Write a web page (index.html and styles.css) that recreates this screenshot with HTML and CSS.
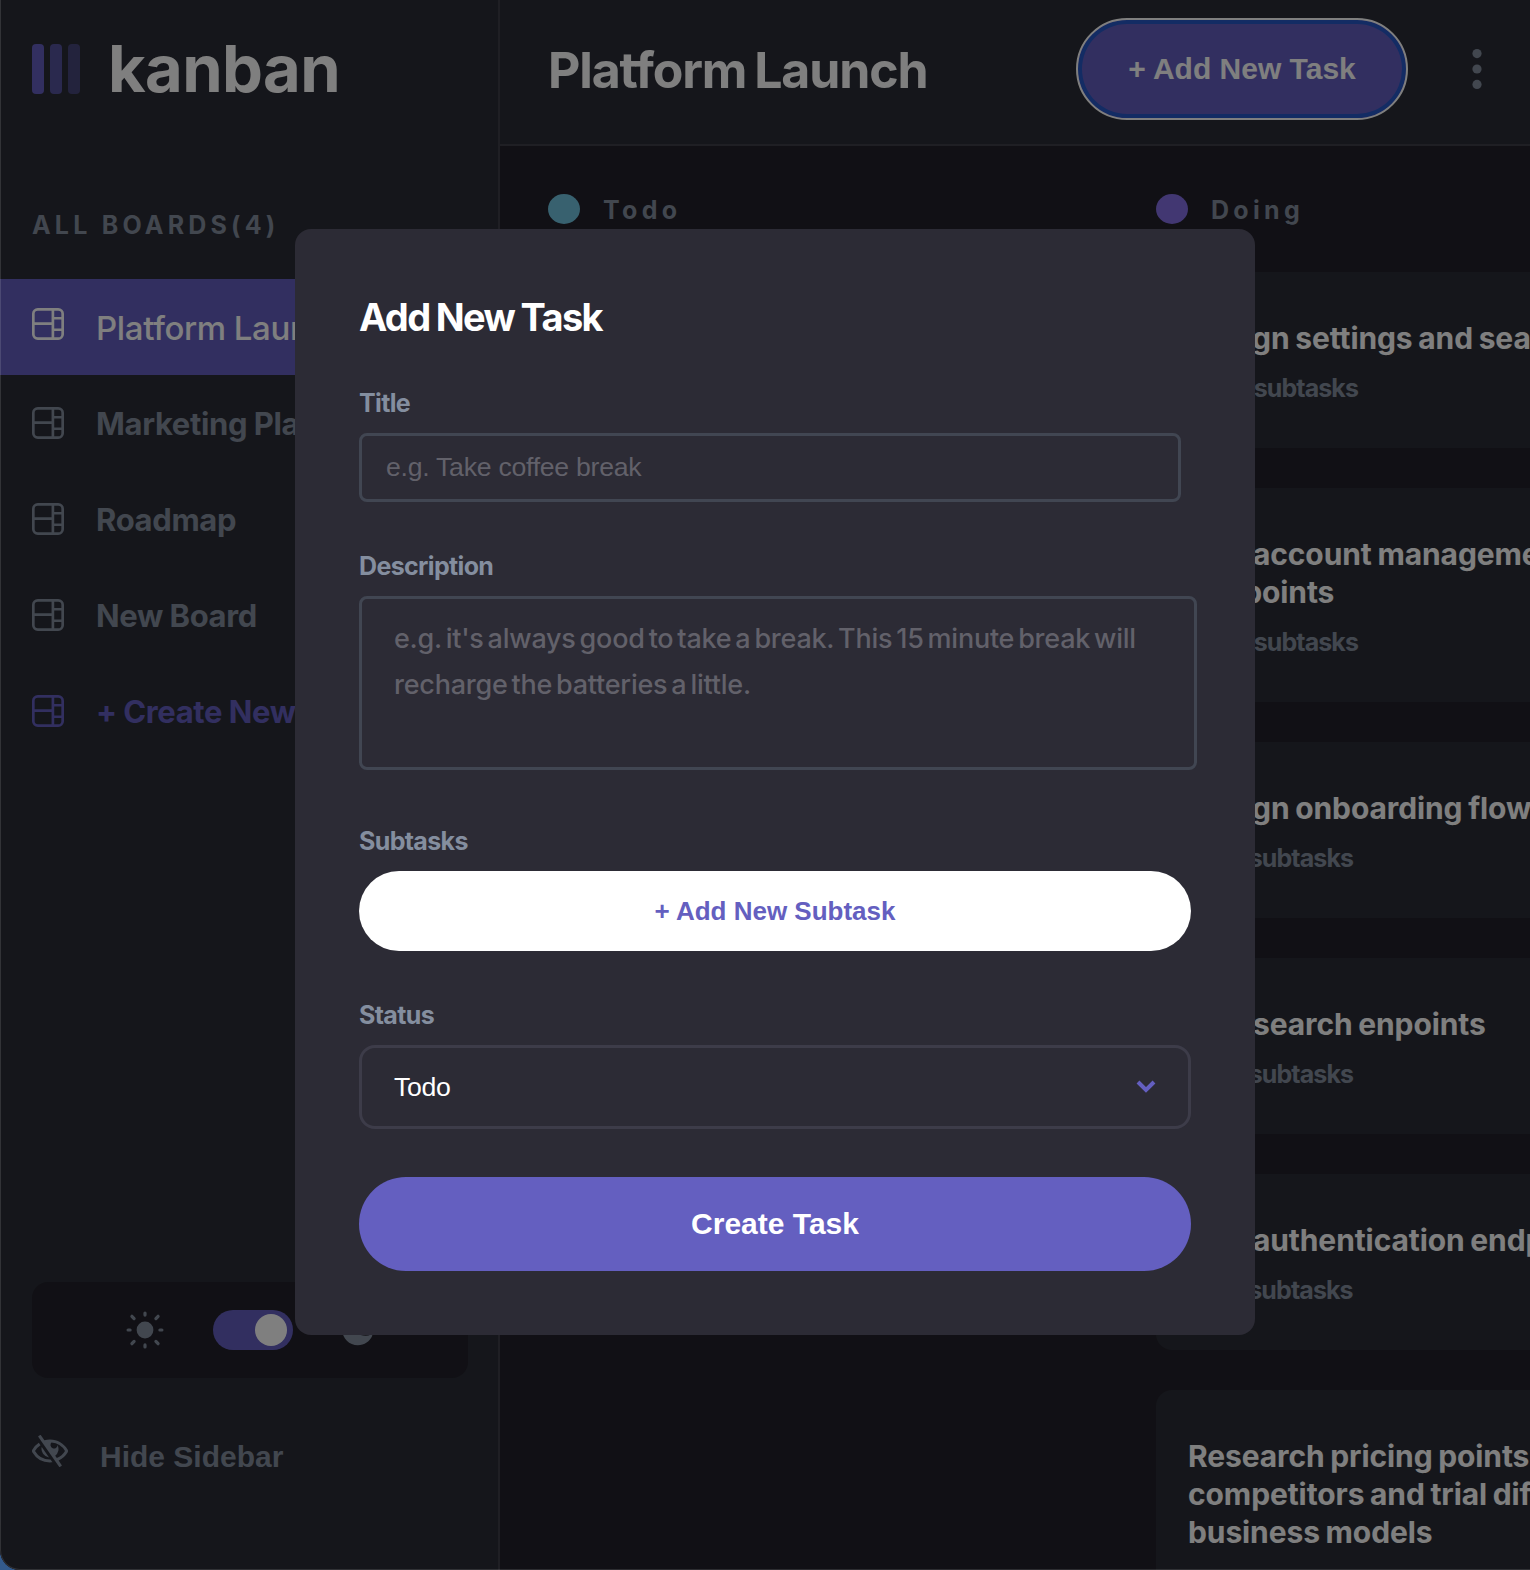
FILE: index.html
```html
<!DOCTYPE html>
<html lang="en">
<head>
<meta charset="utf-8">
<title>Kanban</title>
<link rel="stylesheet" href="styles.css">
</head>
<body>
<svg class="sprite" aria-hidden="true">
  <symbol id="board" viewBox="0 0 16 16"><path d="M0 2.889A2.889 2.889 0 0 1 2.889 0H13.11A2.889 2.889 0 0 1 16 2.889V13.11A2.888 2.888 0 0 1 13.111 16H2.89A2.889 2.889 0 0 1 0 13.111V2.89Zm1.333 5.555v4.667c0 .859.697 1.556 1.556 1.556h6.889V8.444H1.333Zm8.445-1.333V1.333h-6.89A1.556 1.556 0 0 0 1.334 2.89V7.11h8.445Zm4.889-1.333H11.11v4.444h3.556V5.778Zm0 5.778H11.11v3.11h2a1.556 1.556 0 0 0 1.556-1.555v-1.555Zm0-7.112V2.89a1.555 1.555 0 0 0-1.556-1.556h-2v3.111h3.556Z"/></symbol>
</svg>
<div class="app">
  <aside class="sidebar">
    <div class="logo"><span class="bars"><i></i><i></i><i></i></span><span class="wordmark">kanban</span></div>
    <h2 class="boards-title">ALL BOARDS(4)</h2>
    <nav class="boards">
      <a class="item active"><svg class="icon"><use href="#board"/></svg><span>Platform Launch</span></a>
      <a class="item"><svg class="icon"><use href="#board"/></svg><span>Marketing Plan</span></a>
      <a class="item"><svg class="icon"><use href="#board"/></svg><span>Roadmap</span></a>
      <a class="item"><svg class="icon"><use href="#board"/></svg><span>New Board</span></a>
      <a class="item create"><svg class="icon"><use href="#board"/></svg><span>+ Create New Board</span></a>
    </nav>
    <div class="theme">
      <svg class="sun" viewBox="0 0 38 38"><circle cx="19" cy="19" r="8.4"/><path d="M19 2.1v2M19 33.9v2M2.1 19h2M33.9 19h2M5.9 5.3l2.2 2.3M29.9 30.4l2.2 2.3M32.1 5.3l-2.2 2.3M8.1 30.4l-2.2 2.3"/></svg>
      <span class="switch"></span>
      <svg class="moon" viewBox="0 0 16 16"><path d="M6.474.682c.434-.11.718.406.481.78A6.067 6.067 0 0 0 6.01 4.72c0 3.418 2.827 6.187 6.314 6.187.89.002 1.77-.182 2.584-.54.408-.18.894.165.724.57-1.16 2.775-3.944 4.73-7.194 4.73-4.292 0-7.771-3.41-7.771-7.615 0-3.541 2.466-6.518 5.807-7.37Z"/></svg>
    </div>
    <div class="hide">
      <svg class="eye" viewBox="0 0 18 16"><path d="M8.522 11.223a4.252 4.252 0 0 1-3.654-5.22l3.654 5.22ZM9 12.25A8.685 8.685 0 0 1 1.5 8a8.612 8.612 0 0 1 2.76-2.864l-.86-1.23A10.112 10.112 0 0 0 .208 7.238a1.5 1.5 0 0 0 0 1.524A10.187 10.187 0 0 0 9 13.75c.414 0 .828-.025 1.239-.074l-1-1.43A8.88 8.88 0 0 1 9 12.25Zm8.792-3.488a10.14 10.14 0 0 1-4.486 4.046l1.504 2.148a.375.375 0 0 1-.092.523l-.648.453a.375.375 0 0 1-.523-.092L3.19 1.044A.375.375 0 0 1 3.282.52L3.93.068a.375.375 0 0 1 .523.092l1.735 2.479A10.308 10.308 0 0 1 9 2.25c3.746 0 7.031 2 8.792 4.988a1.5 1.5 0 0 1 0 1.524ZM16.5 8a8.674 8.674 0 0 0-6.755-4.219A1.75 1.75 0 1 0 12.75 5v-.001a4.25 4.25 0 0 1-1.154 5.366l.834 1.192A8.641 8.641 0 0 0 16.5 8Z"/></svg>
      <span>Hide Sidebar</span>
    </div>
  </aside>
  <div class="main">
    <header class="topbar">
      <h1>Platform Launch</h1>
      <button class="add-task">+ Add New Task</button>
      <svg class="kebab" viewBox="0 0 10 40"><circle cx="5" cy="4.6" r="4.6"/><circle cx="5" cy="20" r="4.6"/><circle cx="5" cy="35.4" r="4.6"/></svg>
    </header>
    <section class="board">
      <div class="column">
        <h3 class="column-title"><i class="dot todo"></i>Todo</h3>
      </div>
      <div class="column">
        <h3 class="column-title"><i class="dot doing"></i>Doing</h3>
        <article class="card"><h4>Design settings and search</h4><p>2 of 3 subtasks</p></article>
        <article class="card tall"><h4>Add account management<br>endpoints</h4><p>2 of 3 subtasks</p></article>
        <article class="card"><h4>Design onboarding flow</h4><p>1 of 3 subtasks</p></article>
        <article class="card"><h4>Add search enpoints</h4><p>1 of 3 subtasks</p></article>
        <article class="card"><h4>Add authentication endpoints</h4><p>1 of 2 subtasks</p></article>
        <article class="card tallest"><h4>Research pricing points of various<br>competitors and trial different<br>business models</h4><p>1 of 3 subtasks</p></article>
      </div>
    </section>
  </div>
  <div class="overlay">
    <form class="modal">
      <h2 class="modal-title">Add New Task</h2>
      <label>Title</label>
      <input class="field title-field" placeholder="e.g. Take coffee break">
      <label>Description</label>
      <textarea class="field desc-field" placeholder="e.g. it's always good to take a break. This 15 minute break will&#10;recharge the batteries a little."></textarea>
      <label>Subtasks</label>
      <button type="button" class="pill add-subtask">+ Add New Subtask</button>
      <label>Status</label>
      <div class="select"><span>Todo</span><svg class="chevron" viewBox="0 0 10 7"><path d="m1 1 4 4 4-4"/></svg></div>
      <button type="button" class="pill create-task">Create Task</button>
    </form>
  </div>
</div>
</body>
</html>
```
FILE: styles.css
```css
* { box-sizing: border-box; margin: 0; padding: 0; }

body {
  width: 1530px;
  height: 1570px;
  overflow: hidden;
  background: #335a8c;
  font-family: Inter, "Liberation Sans", sans-serif;
  font-variant-ligatures: no-contextual;
}

.sprite { display: none; }

.app {
  position: relative;
  display: grid;
  grid-template-columns: 500px 1fr;
  width: 1530px;
  height: 1570px;
  overflow: hidden;
  border-bottom-left-radius: 20px;
  background: #22212a;
  color: #fff;
}

/* window hairline */
.app::after {
  content: "";
  position: absolute;
  inset: 0;
  z-index: 3;
  border-left: 1px solid rgba(255, 255, 255, 0.12);
  border-bottom: 1px solid rgba(255, 255, 255, 0.12);
  border-bottom-left-radius: 20px;
  pointer-events: none;
}

/* sidebar */
.sidebar {
  display: flex;
  flex-direction: column;
  height: 1570px;
  background: #2b2d36;
  border-right: 2px solid #3e3f48;
}

.logo { display: flex; align-items: center; height: 138px; padding-left: 32px; }
.bars { display: flex; gap: 6px; }
.bars i { width: 12px; height: 50px; border-radius: 4px; background: #645fc0; }
.bars i:nth-child(2) { opacity: 0.75; }
.bars i:nth-child(3) { opacity: 0.5; }
.wordmark { margin: 0 0 0 28px; font-size: 65px; line-height: 80px; font-weight: 700; letter-spacing: -0.6px; }

.boards-title {
  height: 32px;
  margin: 71px 0 38px 32px;
  color: #848e9f;
  font-size: 25px;
  line-height: 32px;
  font-weight: 700;
  letter-spacing: 4.2px;
}

.item {
  display: flex;
  align-items: center;
  gap: 32px;
  height: 96px;
  padding-left: 32px;
  overflow: hidden;
  color: #848e9f;
  font-size: 31px;
  font-weight: 700;
  letter-spacing: -0.35px;
  word-spacing: -0.5px;
  white-space: nowrap;
}
.item span { line-height: 40px; padding-top: 2px; }
.icon { flex: none; width: 32px; height: 32px; fill: currentColor; }
.item.active { background: #645fc0; color: #fff; font-size: 33px; font-weight: 500; }
.item.active .icon { margin-bottom: 6px; }
.item.create { color: #645fc0; }

.theme {
  display: flex;
  align-items: center;
  width: 436px;
  height: 96px;
  margin: 523px 0 0 32px;
  padding-left: 94px;
  border-radius: 16px;
  background: #22212a;
}
.sun { width: 38px; height: 38px; margin: 0 48.7px 1px 0.3px; fill: #848e9f; }
.sun path { stroke: #848e9f; stroke-width: 3.2; stroke-linecap: round; }
.switch { width: 80px; height: 40px; padding: 4px 6px; border-radius: 20px; background: #645fc0; }
.switch::before { content: ""; display: block; width: 32px; height: 32px; margin-left: 36px; border-radius: 50%; background: #fff; }
.moon { width: 32px; height: 32px; margin-left: 48px; fill: #848e9f; }

.hide {
  display: flex;
  align-items: center;
  gap: 32px;
  margin: 53px 0 0 32px;
  color: #848e9f;
  font: 700 30px/34px "Liberation Sans", Arial, sans-serif;
}
.eye { width: 36px; height: 32px; margin-bottom: 3px; fill: currentColor; }
.hide span { padding-top: 9px; }

/* header */
.main { min-width: 0; overflow: hidden; }
.topbar {
  display: flex;
  align-items: center;
  height: 146px;
  padding: 0 48px 8px 48px;
  background: #2b2d36;
  border-bottom: 2px solid #3e3f48;
}
.topbar h1 { margin-right: auto; padding-top: 3px; font-size: 50px; font-weight: 700; letter-spacing: -1.15px; word-spacing: -2.8px; line-height: 60px; }
.add-task {
  width: 332px;
  height: 102px;
  margin: 2px 64px 0 0;
  border: 2px solid #fff;
  border-radius: 51px;
  background: #645fc0;
  box-shadow: inset 0 0 0 4px #2658c8;
  color: #fff;
  font: 700 30px "Liberation Sans", Arial, sans-serif;
}
.kebab { width: 10px; height: 40px; margin-top: 2px; fill: #848e9f; }

/* board */
.board { display: flex; gap: 48px; padding: 48px; }
.column { flex: none; display: flex; flex-direction: column; gap: 40px; width: 560px; }
.column-title {
  display: flex;
  align-items: center;
  height: 32px;
  margin-bottom: 6px;
  color: #848e9f;
  font-size: 25px;
  line-height: 32px;
  font-weight: 700;
  letter-spacing: 4.3px;
}
.dot { width: 32px; height: 30px; margin: 0 23px 2px 0; border-radius: 50%; }
.dot.todo { background: #70c2df; }
.dot.doing { background: #846ee4; }

.card {
  flex: none;
  height: 176px;
  padding: 47px 32px;
  border-radius: 16px;
  background: #2b2d36;
  white-space: nowrap;
}
.card.tall { height: 214px; }
.card.tallest { height: 252px; }
.card h4 { font-size: 30px; line-height: 38px; font-weight: 700; letter-spacing: -0.1px; word-spacing: -1.3px; }
.card p { margin-top: 16px; color: #848e9f; font-size: 25px; line-height: 30px; font-weight: 700; letter-spacing: -0.9px; word-spacing: -1px; }

/* dialog */
.overlay {
  position: absolute;
  inset: 0;
  z-index: 2;
  padding: 229px 0 0 295px;
  background: rgba(0, 0, 0, 0.5);
}
.modal {
  display: flex;
  flex-direction: column;
  width: 960px;
  height: 1106px;
  padding: 64px;
  border-radius: 16px;
  background: #2c2b35;
}
.modal-title { margin-bottom: 46px; font-size: 38px; line-height: 48px; font-weight: 700; letter-spacing: -1.65px; word-spacing: -1px; }
.modal label { margin-bottom: 14px; color: #848e9f; font-size: 25px; line-height: 32px; font-weight: 700; letter-spacing: -0.65px; }
.field { display: block; border: 3px solid #414652; border-radius: 8px; background: transparent; color: #fff; outline: none; resize: none; overflow: hidden; }
.field::placeholder { color: #62616a; opacity: 1; }
.title-field { width: 822px; height: 69px; margin-bottom: 48px; padding: 0 24px; font: 26.67px "Liberation Sans", Arial, sans-serif; letter-spacing: -0.27px; }
.desc-field { width: 838px; height: 174px; margin-bottom: 55px; padding: 17px 0 0 32px; font: 500 27px/46px Inter, sans-serif; letter-spacing: -0.24px; word-spacing: -3px; white-space: pre; }
.pill { flex: none; border: 0; border-radius: 47px; font-family: "Liberation Sans", Arial, sans-serif; font-weight: 700; }
.add-subtask { height: 80px; margin-bottom: 48px; background: #fff; color: #645fc0; font-size: 26px; }
.select {
  display: flex;
  align-items: center;
  justify-content: space-between;
  height: 84px;
  margin-bottom: 48px;
  padding: 0 32px;
  border: 3px solid #3d3c49;
  border-radius: 16px;
  font: 26.67px "Liberation Sans", Arial, sans-serif;
  letter-spacing: -0.3px;
}
.chevron { width: 20px; height: 14px; fill: none; stroke: #645fc0; stroke-width: 2; }
.create-task { height: 94px; background: #645fc0; color: #fff; font-size: 30px; }
```
